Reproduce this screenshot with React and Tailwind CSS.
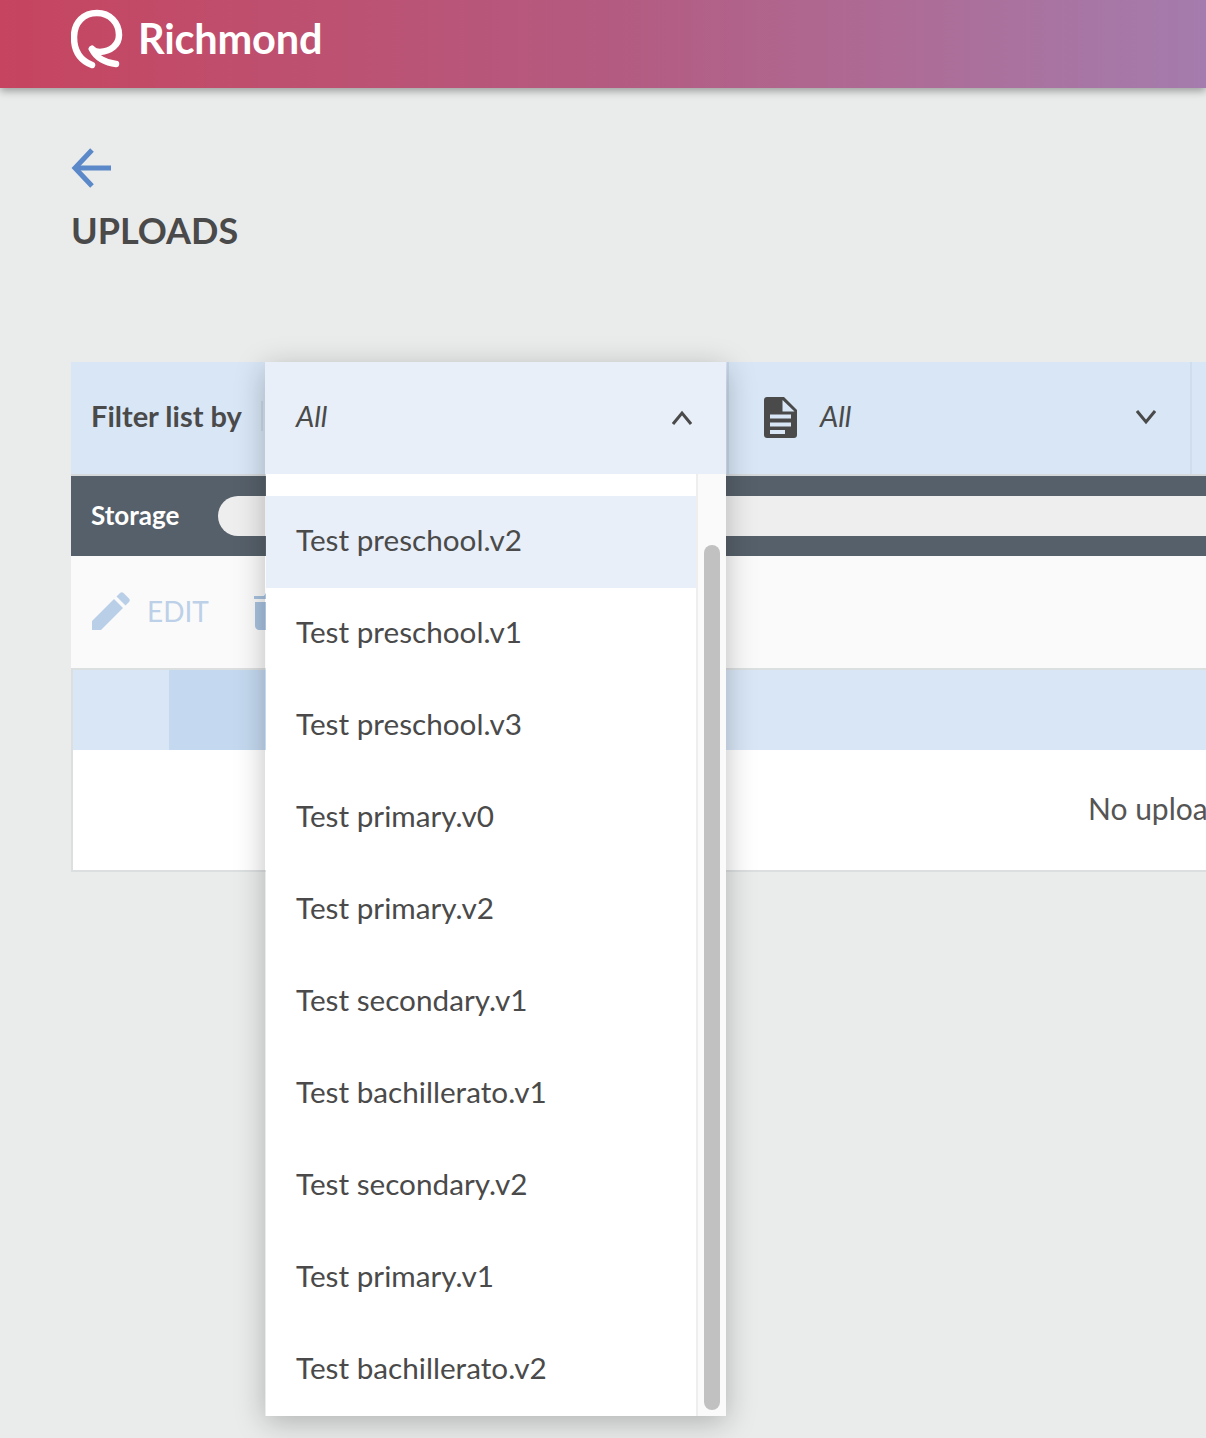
import React from "react";

const items = [
  "Test preschool.v2",
  "Test preschool.v1",
  "Test preschool.v3",
  "Test primary.v0",
  "Test primary.v2",
  "Test secondary.v1",
  "Test bachillerato.v1",
  "Test secondary.v2",
  "Test primary.v1",
  "Test bachillerato.v2",
];

function Logo() {
  return (
    <svg width="53" height="62" viewBox="71 9 53 62" fill="none" stroke="white" strokeWidth="6.500" strokeLinecap="round" strokeLinejoin="round" className="shrink-0">
      <path d="M92 65C79 60 74 50 74 37C74 22 84 13 97 13C110 13 119 23 119 35C119 45 111 51 100 52C97 52 94 51 92 49" />
      <path d="M92 49C96 58 106 63 116 64" />
    </svg>
  );
}

function FileIcon() {
  return (
    <svg width="33" height="41" viewBox="0 0 33 41" className="shrink-0 mb-[1px]">
      <path d="M3 0H20L33 13V38C33 39.700 31.700 41 30 41H3C1.300 41 0 39.700 0 38V3C0 1.300 1.300 0 3 0Z" fill="#4a4a4a" />
      <path d="M18.500 3L30.500 14.500H18.500Z" fill="#d8e6f6" />
      <rect x="6" y="17.500" width="21" height="4" fill="#d8e6f6" />
      <rect x="6" y="25.500" width="21" height="4" fill="#d8e6f6" />
      <rect x="6" y="33" width="15" height="4" fill="#d8e6f6" />
    </svg>
  );
}

export default function App() {
  return (
    <div className="w-[1206px] h-[1438px] overflow-hidden bg-[#eaecec] font-[Lato,sans-serif] text-[#4a4a4a]">
      <header className="h-[88px] pl-[71px] flex items-center bg-gradient-to-r from-[#c6445f] via-[#b45a80] to-[#a47cad] shadow-[0_3px_8px_rgba(0,0,0,0.35)]">
        <div className="flex items-center gap-[14px] -mt-[8px]">
          <Logo />
          <span className="text-[41.500px] font-bold leading-none text-white tracking-[-0.2px] mb-[2px]">Richmond</span>
        </div>
      </header>

      <div className="pl-[71px] pt-[60px]">
        <svg width="40" height="40" viewBox="0 0 40 40" fill="none" stroke="#5a88c8" strokeWidth="5" className="block">
          <path d="M40 20H4" />
          <path d="M21 2L4 20L21 38" />
        </svg>
        <h1 className="mt-[22px] text-[36px] leading-[40px] font-bold text-[#4a4a4a]">UPLOADS</h1>

        <div className="mt-[112px] w-[1300px]">
          <div className="h-[114px] flex bg-[#d8e6f6] border-b-2 border-[#d6d9db]">
            <div className="w-[193px] flex items-center justify-between pl-[20px] pr-[1px] pb-[4px] text-[29px] font-bold">
              <span>Filter list by</span>
              <span className="w-[2px] h-[30px] bg-[#c9d8ea]" />
            </div>
            <div className="relative w-[462px] z-10">
              <div className="absolute left-[1px] top-0 w-[461px] shadow-[0_6px_28px_rgba(0,0,0,0.25)]">
                <div className="h-[112px] bg-[#e8eff8] flex items-center justify-between pl-[31px] pr-[34px]">
                  <span className="italic text-[29px] mb-[4px]">All</span>
                  <svg width="20" height="15" viewBox="0 0 20 15" fill="none" stroke="#4a4a4a" strokeWidth="3" className="mb-[2px]">
                    <path d="M1 14L10 3L19 14" />
                  </svg>
                </div>
                <div className="flex h-[942px] ml-[1px] bg-white">
                  <div className="w-[430px] pt-[22px]">
                    {items.map((t, i) => (
                      <div key={t} className={`h-[92px] pl-[30px] pb-[4px] flex items-center text-[29.700px] text-[#4a4a4a] ${i === 0 ? "bg-[#e8eff8]" : ""}`}>{t}</div>
                    ))}
                  </div>
                  <div className="w-[30px] bg-[#fafafa] border-l-2 border-[#eeeeee] pl-[6px] pt-[71px]">
                    <div className="w-[16px] h-[865px] rounded-full bg-[#c1c1c1]" />
                  </div>
                </div>
              </div>
            </div>
            <div className="ml-[1px] w-[465px] flex items-center justify-between pl-[35px] pr-[34px] border-l-2 border-[#c9d8ea] border-r-2 border-r-[#cfdeee]">
              <div className="flex items-center gap-[23px]">
                <FileIcon />
                <span className="italic text-[29px] mb-[4px]">All</span>
              </div>
              <svg width="20" height="15" viewBox="0 0 20 15" fill="none" stroke="#4a4a4a" strokeWidth="3" className="mb-[2px]">
                <path d="M1 1L10 12L19 1" />
              </svg>
            </div>
          </div>

          <div className="h-[80px] bg-[#56606a] flex items-center pl-[20px]">
            <span className="w-[127px] text-[26px] font-bold text-white mb-[2px]">Storage</span>
            <div className="flex-1 h-[40px] rounded-l-[20px] bg-[#eeeeee]" />
          </div>

          <div className="h-[112px] bg-[#fafafa] flex items-center pl-[21px]">
            <svg width="38" height="38" viewBox="0 0 38 38" fill="#b9cfe8" className="shrink-0 mb-[2px]">
              <path d="M0 29L22 7L31 16L9 38H0Z" />
              <path d="M24.500 4.500L28 1C29 0 30.500 0 31.500 1L37 6.500C38 7.500 38 9 37 10L33.500 13.500Z" />
            </svg>
            <span className="ml-[17px] text-[28px] text-[#bcd0e8] mb-[2px]">EDIT</span>
            <svg width="36" height="38" viewBox="0 0 36 38" fill="#a9c2df" className="ml-[44px] shrink-0 mb-[2px]">
              <path d="M1 7H35V4H25L23 1H13L11 4H1Z" />
              <path d="M2 10H34V34C34 36 32 38 30 38H6C4 38 2 36 2 34Z" />
            </svg>
          </div>

          <div className="border-t-2 border-l-2 border-b-2 border-[#dcdfe0] bg-white">
            <div className="h-[80px] flex bg-[#d8e6f6]">
              <div className="w-[96px]" />
              <div className="w-[300px] bg-[#c4d9ef]" />
            </div>
            <div className="h-[120px] pl-[1015px] pt-[42px] text-[30px] leading-[32px] whitespace-nowrap text-[#555555]">No uploads</div>
          </div>
        </div>
      </div>
    </div>
  );
}
